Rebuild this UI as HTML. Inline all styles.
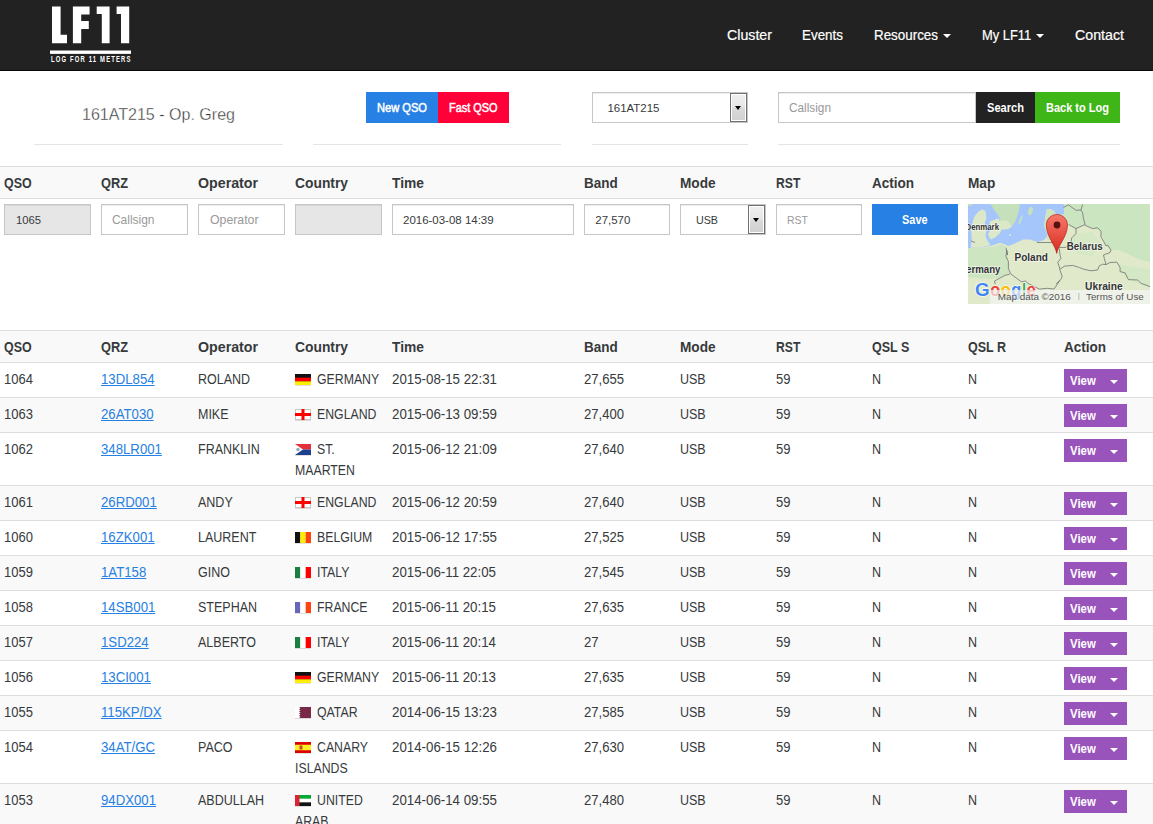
<!DOCTYPE html>
<html><head><meta charset="utf-8"><style>
html,body{margin:0;padding:0;}
body{width:1153px;height:824px;overflow:hidden;position:relative;background:#fff;font-family:"Liberation Sans", sans-serif;color:#373a3c;}
.t{position:absolute;white-space:nowrap;}
.r{position:absolute;}
.caret{width:0;height:0;border-style:solid;border-width:4px 4px 0 4px;border-color:transparent;}
.sel{border:1px solid #707070;box-shadow:inset 0 0 0 1px #fff;background:linear-gradient(#f0f0f0,#e6e6e6 48%,#dadada 52%,#d0d0d0);}
</style></head><body>
<div class="r" style="left:0px;top:0px;width:1153px;height:70px;background:#222;"></div>
<div class="r" style="left:0px;top:70px;width:1153px;height:1px;background:#080808;"></div>
<svg class="r" style="left:0;top:0" width="200" height="70" viewBox="0 0 200 70">
<g fill="#fff">
<path d="M52 6.5h8.6v28.2h6.4v8.6H52z"/>
<path d="M72.9 6.5h16.7v8.1h-8.4v6.4h7.6v8.1h-7.6v14.2h-8.3z"/>
<path d="M96.7 6.5h12.9v36.8h-7.8V14H96.7z"/>
<path d="M116.6 6.5h12.6v36.8h-8.2V14h-4.4z"/>
<rect x="50" y="50.5" width="81" height="3.4"/>
</g>
<g transform="translate(51,62.2) scale(0.7,1)"><text x="0" y="0" fill="#fff" font-family="Liberation Sans" font-weight="bold" font-size="8.4" textLength="113.5" lengthAdjust="spacing">LOG FOR 11 METERS</text></g>
</svg>
<div class="t" style="left:727px;top:28px;font-size:14.2px;line-height:14.2px;color:#fff;-webkit-text-stroke:0.2px #fff;transform:scaleX(1.0000);transform-origin:0 0;">Cluster</div>
<div class="t" style="left:802px;top:28px;font-size:14.2px;line-height:14.2px;color:#fff;-webkit-text-stroke:0.2px #fff;transform:scaleX(0.9447);transform-origin:0 0;">Events</div>
<div class="t" style="left:874px;top:28px;font-size:14.2px;line-height:14.2px;color:#fff;-webkit-text-stroke:0.2px #fff;transform:scaleX(0.9433);transform-origin:0 0;">Resources</div>
<div class="t" style="left:981.5px;top:28px;font-size:14.2px;line-height:14.2px;color:#fff;-webkit-text-stroke:0.2px #fff;transform:scaleX(0.9096);transform-origin:0 0;">My LF11</div>
<div class="t" style="left:1075px;top:28px;font-size:14.2px;line-height:14.2px;color:#fff;-webkit-text-stroke:0.2px #fff;transform:scaleX(1.0010);transform-origin:0 0;">Contact</div>
<div class="r caret" style="left:943px;top:34px;border-top-color:#fff"></div>
<div class="r caret" style="left:1036px;top:34px;border-top-color:#fff"></div>
<div class="t" style="left:82px;top:106px;font-size:16.05px;line-height:16.05px;color:#333;-webkit-text-stroke:0.35px #fff;">161AT215 - Op. Greg</div>
<div class="r" style="left:34px;top:144px;width:249px;height:1px;background:#e5e5e5;"></div>
<div class="r" style="left:313px;top:144px;width:248px;height:1px;background:#e5e5e5;"></div>
<div class="r" style="left:592px;top:144px;width:156px;height:1px;background:#e5e5e5;"></div>
<div class="r" style="left:778px;top:144px;width:342px;height:1px;background:#e5e5e5;"></div>
<div class="r" style="left:366px;top:92px;width:72px;height:31px;background:#2780e3;"></div>
<div class="r" style="left:438px;top:92px;width:71px;height:31px;background:#ff0039;"></div>
<div class="t" style="left:377px;top:102px;font-size:12px;line-height:12px;color:#fff;-webkit-text-stroke:0.5px #fff;transform:scaleX(0.9259);transform-origin:0 0;">New QSO</div>
<div class="t" style="left:449.4px;top:102px;font-size:12px;line-height:12px;color:#fff;-webkit-text-stroke:0.5px #fff;transform:scaleX(0.9110);transform-origin:0 0;">Fast QSO</div>
<div class="r" style="left:592px;top:92px;width:154px;height:29px;background:#fff;border:1px solid #c6c6c6;box-shadow:inset 0 1px 1px rgba(0,0,0,0.075);"></div>
<div class="r sel" style="left:730px;top:93px;width:15px;height:27px"></div>
<div class="r caret" style="left:735px;top:106px;border-top-color:#000;border-width:4px 3.7px 0 3.7px"></div>
<div class="t" style="left:607.5px;top:103px;font-size:11.45px;line-height:11.45px;transform:scaleX(1.0000);transform-origin:0 0;">161AT215</div>
<div class="r" style="left:778px;top:92px;width:196px;height:29px;background:#fff;border:1px solid #c6c6c6;box-shadow:inset 0 1px 1px rgba(0,0,0,0.075);"></div>
<div class="t" style="left:789.4px;top:103px;font-size:11.9px;line-height:11.9px;color:#999;transform:scaleX(0.9917);transform-origin:0 0;">Callsign</div>
<div class="r" style="left:976px;top:92px;width:59px;height:31px;background:#222;"></div>
<div class="r" style="left:1035px;top:92px;width:85px;height:31px;background:#3fb618;"></div>
<div class="t" style="left:987px;top:102px;font-size:12px;line-height:12px;font-weight:700;color:#fff;transform:scaleX(0.9238);transform-origin:0 0;">Search</div>
<div class="t" style="left:1045.8px;top:102px;font-size:12px;line-height:12px;font-weight:700;color:#fff;transform:scaleX(0.9170);transform-origin:0 0;">Back to Log</div>
<div class="r" style="left:0px;top:166px;width:1153px;height:1px;background:#ddd;"></div>
<div class="r" style="left:0px;top:167px;width:1153px;height:31px;background:#f9f9f9;"></div>
<div class="r" style="left:0px;top:198px;width:1153px;height:1px;background:#ddd;"></div>
<div class="t" style="left:4px;top:176px;font-size:14px;line-height:14px;font-weight:700;transform:scaleX(0.8875);transform-origin:0 0;">QSO</div>
<div class="t" style="left:101px;top:176px;font-size:14px;line-height:14px;font-weight:700;transform:scaleX(0.9137);transform-origin:0 0;">QRZ</div>
<div class="t" style="left:198px;top:176px;font-size:14px;line-height:14px;font-weight:700;transform:scaleX(1.0152);transform-origin:0 0;">Operator</div>
<div class="t" style="left:295px;top:176px;font-size:14px;line-height:14px;font-weight:700;transform:scaleX(0.9879);transform-origin:0 0;">Country</div>
<div class="t" style="left:392px;top:176px;font-size:14px;line-height:14px;font-weight:700;transform:scaleX(0.9846);transform-origin:0 0;">Time</div>
<div class="t" style="left:584px;top:176px;font-size:14px;line-height:14px;font-weight:700;transform:scaleX(0.9629);transform-origin:0 0;">Band</div>
<div class="t" style="left:680px;top:176px;font-size:14px;line-height:14px;font-weight:700;transform:scaleX(0.9740);transform-origin:0 0;">Mode</div>
<div class="t" style="left:776px;top:176px;font-size:14px;line-height:14px;font-weight:700;transform:scaleX(0.8679);transform-origin:0 0;">RST</div>
<div class="t" style="left:872px;top:176px;font-size:14px;line-height:14px;font-weight:700;transform:scaleX(0.9667);transform-origin:0 0;">Action</div>
<div class="t" style="left:968px;top:176px;font-size:14px;line-height:14px;font-weight:700;transform:scaleX(0.9750);transform-origin:0 0;">Map</div>
<div class="r" style="left:4px;top:204px;width:85px;height:29px;background:#e6e6e6;border:1px solid #c6c6c6;box-shadow:inset 0 1px 1px rgba(0,0,0,0.075);"></div>
<div class="t" style="left:15.5px;top:215px;font-size:11px;line-height:11px;transform:scaleX(1.0225);transform-origin:0 0;">1065</div>
<div class="r" style="left:101px;top:204px;width:85px;height:29px;background:#fff;border:1px solid #c6c6c6;box-shadow:inset 0 1px 1px rgba(0,0,0,0.075);"></div>
<div class="t" style="left:112.3px;top:215px;font-size:11.9px;line-height:11.9px;color:#999;transform:scaleX(1.0035);transform-origin:0 0;">Callsign</div>
<div class="r" style="left:198px;top:204px;width:85px;height:29px;background:#fff;border:1px solid #c6c6c6;box-shadow:inset 0 1px 1px rgba(0,0,0,0.075);"></div>
<div class="t" style="left:209.5px;top:214px;font-size:12px;line-height:12px;color:#999;transform:scaleX(1.0243);transform-origin:0 0;">Operator</div>
<div class="r" style="left:295px;top:204px;width:85px;height:29px;background:#e6e6e6;border:1px solid #c6c6c6;box-shadow:inset 0 1px 1px rgba(0,0,0,0.075);"></div>
<div class="r" style="left:392px;top:204px;width:180px;height:29px;background:#fff;border:1px solid #c6c6c6;box-shadow:inset 0 1px 1px rgba(0,0,0,0.075);"></div>
<div class="t" style="left:403.4px;top:215px;font-size:11.5px;line-height:11.5px;transform:scaleX(0.9978);transform-origin:0 0;">2016-03-08 14:39</div>
<div class="r" style="left:584px;top:204px;width:84px;height:29px;background:#fff;border:1px solid #c6c6c6;box-shadow:inset 0 1px 1px rgba(0,0,0,0.075);"></div>
<div class="t" style="left:595.3px;top:215px;font-size:11.45px;line-height:11.45px;transform:scaleX(1.0000);transform-origin:0 0;">27,570</div>
<div class="r" style="left:680px;top:204px;width:84px;height:29px;background:#fff;border:1px solid #c6c6c6;box-shadow:inset 0 1px 1px rgba(0,0,0,0.075);"></div>
<div class="r sel" style="left:748px;top:205px;width:15px;height:27px"></div>
<div class="r caret" style="left:753px;top:218px;border-top-color:#000;border-width:4px 3.7px 0 3.7px"></div>
<div class="t" style="left:695.6px;top:215px;font-size:11.5px;line-height:11.5px;transform:scaleX(0.9302);transform-origin:0 0;">USB</div>
<div class="r" style="left:776px;top:204px;width:84px;height:29px;background:#fff;border:1px solid #c6c6c6;box-shadow:inset 0 1px 1px rgba(0,0,0,0.075);"></div>
<div class="t" style="left:787.2px;top:215px;font-size:11.5px;line-height:11.5px;color:#999;transform:scaleX(0.9130);transform-origin:0 0;">RST</div>
<div class="r" style="left:872px;top:204px;width:86px;height:31px;background:#2780e3;"></div>
<div class="t" style="left:902.4px;top:214px;font-size:12px;line-height:12px;font-weight:700;color:#fff;transform:scaleX(0.9127);transform-origin:0 0;">Save</div>
<svg class="r" style="left:968px;top:204px" width="182" height="100" viewBox="0 0 182 100">
<defs><linearGradient id="pg" x1="0" y1="0" x2="0" y2="1"><stop offset="0" stop-color="#f77a6c"/><stop offset="1" stop-color="#d8291c"/></linearGradient></defs>
<rect width="182" height="100" fill="#e0eacb"/>
<path d="M96 0H182V58L172 56L160 50L150 46L143 46L138 42L135.5 37L133 27L124 24L117 21L108 24.6L100 20L96 18Z" fill="#cce5c1"/>
<path d="M0 44L12 44L25 43L34 40L38 44L40 58L42 69L30 74L20 75L0 73Z" fill="#cde5c0"/>
<path d="M150 60L160 62L182 65V84L172 80L160 76L152 68Z" fill="#d5e8c6"/>
<path d="M105 30L125 28L133 40L125 52L110 50L104 40Z" fill="#d6e8c5"/>
<path d="M0 0H96V10.5L88 10.5L86 7L82 5L78.7 5.3L77.1 14.3L76.3 22.5L79.5 30.6L78.7 33L75.5 36.3L68.9 38L62.4 35.5L55.1 35.5L46.9 39.6L40.4 42L37.1 40.4L32.2 38.8L22.5 42L10.2 43.7L0 44Z" fill="#a5c6fb"/>
<path d="M22.5 0H52.2L50.2 9.4L46.9 18.4L43.7 22.5L40.4 24.9L33.1 25.7L32.2 14.3L26.5 6.2Z" fill="#c5e1bc"/>
<path d="M32.2 16L40 17L43.7 22.5L40.4 24.9L33.1 25.7Z" fill="#dce8c8"/>
<path d="M14.3 5.3L17.6 7L18.4 14.3L16.8 19.2L18.4 24.9L17.6 32.2L19.2 36.3L22.5 41.2L10.2 43.7L2.9 43.7L3.7 33L2.9 24.9L4.5 18.4L6.2 12.7L10.2 7.8Z" fill="#dce8c8"/>
<path d="M21.6 17.6L30.6 14.3L34.7 22.5L32.2 29L26.5 33.9L22.5 35.5L20 30.6L22.5 24.9Z" fill="#dce8c8"/>
<path d="M0 0H4.5L3 1.7H0Z" fill="#c5e1bc"/>
<ellipse cx="62.5" cy="7" rx="2.2" ry="4.3" fill="#c5e1bc" transform="rotate(15 62.5 7)"/>
<ellipse cx="52.5" cy="16" rx="0.9" ry="5" fill="#c5e1bc" transform="rotate(20 52.5 16)"/>
<circle cx="42" cy="31" r="1" fill="#dce8c8"/>
<path d="M78.7 5.3L82 5L86 7L88 10.5L96 10.5L96 36L79.5 36L78.7 33L79.5 30.6L76.3 22.5L77.1 14.3Z" fill="#cfe5c1"/>
<g fill="none" stroke="#777" stroke-width="0.85" stroke-linejoin="round">
<path d="M38 43.6L39.6 51L38.7 46L38 52.5L40.4 57.4L40.4 64.7L42.4 68.8L41.2 70.4L37 71.3L26.5 77L27.3 80.2"/>
<path d="M42.4 69.6L50 75.3L53.4 77.8L57.5 77L60 79.4L66.5 82.7L71.4 85.1L79.5 84.3L86 85.1L92 76.2"/>
<path d="M69 38.5H92.4"/>
<path d="M88 43.4H98L103 38L103.8 33.8L108 29.6L108 24.6"/>
<path d="M91.3 44.6L92.2 52L93 54.3L89.7 58.5L91.3 62.7L92.2 66.8L94.2 72.6L93 75.1L88 80.1"/>
<path d="M92.2 65.2L96.3 62.2L104.7 61.4L111.3 63.5L115.5 65.2L123 66.8L129.6 66L131.3 61.8L134.6 60.2L138 60.6L142 58.5L148.8 58.1L152.1 63.5L152.1 67.6L157.1 68.9L160.4 75.6L169.6 76L173 79.3L182 82.6"/>
<path d="M138 60.6L136.3 54.3L135.5 51L142.1 48.5L143 46L139.6 41L138 42L135.5 37.1L133 33L133 27.1L129.6 23.8L124.6 24.6L117.1 21.3"/>
<path d="M95.5 3.4L100.5 0.9L108 6.3L113 5.9L114.6 0.5"/>
<path d="M113 5.9L114.6 8.8L115.5 14.7L117.1 20.5L108 24.6L100.5 20.5"/>
<path d="M3 37L7 38.5"/>
</g>
<g font-family="Liberation Sans" font-weight="bold" fill="#333" stroke="#fff" stroke-width="1.6" stroke-opacity="0.6" paint-order="stroke">
<text x="-2.5" y="25.6" font-size="9.2" textLength="33.5" lengthAdjust="spacingAndGlyphs">Denmark</text>
<text x="46.5" y="56.6" font-size="10.8" textLength="33.4" lengthAdjust="spacingAndGlyphs">Poland</text>
<text x="98.8" y="46.4" font-size="10.2" textLength="35.8" lengthAdjust="spacingAndGlyphs">Belarus</text>
<text x="-9.5" y="68.5" font-size="10.6" textLength="42" lengthAdjust="spacingAndGlyphs">Germany</text>
<text x="117.1" y="86" font-size="10.5" textLength="37.5" lengthAdjust="spacingAndGlyphs">Ukraine</text>
</g>
<g font-family="Liberation Sans" font-size="19" font-weight="bold" stroke="#fff" stroke-width="1.6" stroke-opacity="0.75" paint-order="stroke">
<text x="7" y="92" fill="#4285f4" textLength="14.6" lengthAdjust="spacingAndGlyphs">G</text>
<text x="22.3" y="92" fill="#ea4335" textLength="10" lengthAdjust="spacingAndGlyphs">o</text>
<text x="32.8" y="92" fill="#fbbc05" textLength="10" lengthAdjust="spacingAndGlyphs">o</text>
<text x="43.2" y="92" fill="#4285f4" textLength="10" lengthAdjust="spacingAndGlyphs">g</text>
<text x="54.2" y="92" fill="#34a853" textLength="3.6" lengthAdjust="spacingAndGlyphs">l</text>
<text x="58.4" y="92" fill="#ea4335" textLength="9.4" lengthAdjust="spacingAndGlyphs">e</text>
</g>
<rect x="22" y="86" width="160" height="14" fill="#f5f5f5" fill-opacity="0.7"/>
<g font-family="Liberation Sans" font-size="9.4" fill="#555">
<text x="29.8" y="95.8" textLength="73" lengthAdjust="spacingAndGlyphs">Map data ©2016</text>
<text x="118" y="96" textLength="57.8" lengthAdjust="spacingAndGlyphs">Terms of Use</text>
</g>
<rect x="110.5" y="89" width="0.8" height="7" fill="#aaa"/>
<path d="M88.7 49.4C87.5 41 78.5 33 78.3 21A10.6 10.6 0 0 1 99.5 21C99.3 33 90 41 88.7 49.4Z" fill="url(#pg)" stroke="#b0201a" stroke-width="0.7"/>
<circle cx="89" cy="21" r="3.4" fill="#5a1010"/>
</svg>

<div class="r" style="left:0px;top:330px;width:1153px;height:1px;background:#ddd;"></div>
<div class="r" style="left:0px;top:331px;width:1153px;height:31px;background:#f9f9f9;"></div>
<div class="r" style="left:0px;top:362px;width:1153px;height:1px;background:#ddd;"></div>
<div class="t" style="left:4px;top:340px;font-size:14px;line-height:14px;font-weight:700;transform:scaleX(0.8875);transform-origin:0 0;">QSO</div>
<div class="t" style="left:101px;top:340px;font-size:14px;line-height:14px;font-weight:700;transform:scaleX(0.9137);transform-origin:0 0;">QRZ</div>
<div class="t" style="left:198px;top:340px;font-size:14px;line-height:14px;font-weight:700;transform:scaleX(1.0152);transform-origin:0 0;">Operator</div>
<div class="t" style="left:295px;top:340px;font-size:14px;line-height:14px;font-weight:700;transform:scaleX(0.9879);transform-origin:0 0;">Country</div>
<div class="t" style="left:392px;top:340px;font-size:14px;line-height:14px;font-weight:700;transform:scaleX(0.9846);transform-origin:0 0;">Time</div>
<div class="t" style="left:584px;top:340px;font-size:14px;line-height:14px;font-weight:700;transform:scaleX(0.9629);transform-origin:0 0;">Band</div>
<div class="t" style="left:680px;top:340px;font-size:14px;line-height:14px;font-weight:700;transform:scaleX(0.9740);transform-origin:0 0;">Mode</div>
<div class="t" style="left:776px;top:340px;font-size:14px;line-height:14px;font-weight:700;transform:scaleX(0.8679);transform-origin:0 0;">RST</div>
<div class="t" style="left:872px;top:340px;font-size:14px;line-height:14px;font-weight:700;transform:scaleX(0.8934);transform-origin:0 0;">QSL S</div>
<div class="t" style="left:968px;top:340px;font-size:14px;line-height:14px;font-weight:700;transform:scaleX(0.8931);transform-origin:0 0;">QSL R</div>
<div class="t" style="left:1064px;top:340px;font-size:14px;line-height:14px;font-weight:700;transform:scaleX(0.9667);transform-origin:0 0;">Action</div>
<div class="r" style="left:0px;top:397px;width:1153px;height:1px;background:#ddd;"></div>
<div class="t" style="left:4px;top:372px;font-size:14px;line-height:14px;transform:scaleX(0.9278);transform-origin:0 0;">1064</div>
<div class="t" style="left:101px;top:372px;font-size:14px;line-height:14px;color:#2780e3;text-decoration:underline;transform:scaleX(0.9428);transform-origin:0 0;">13DL854</div>
<div class="t" style="left:198px;top:372px;font-size:14px;line-height:14px;transform:scaleX(0.8929);transform-origin:0 0;">ROLAND</div>
<svg class="r" style="left:295px;top:374px" width="16" height="12" viewBox="0 0 16 12"><rect width="16" height="11" fill="#111"/><rect y="3.67" width="16" height="3.67" fill="#f00"/><rect y="7.33" width="16" height="3.67" fill="#fe0"/><rect y="11" width="16" height="1" fill="#000" fill-opacity="0.12"/></svg>
<div class="t" style="left:317px;top:372px;font-size:14px;line-height:14px;transform:scaleX(0.8785);transform-origin:0 0;">GERMANY</div>
<div class="t" style="left:392px;top:372px;font-size:14px;line-height:14px;transform:scaleX(0.9498);transform-origin:0 0;">2015-08-15 22:31</div>
<div class="t" style="left:584px;top:372px;font-size:14px;line-height:14px;transform:scaleX(0.9357);transform-origin:0 0;">27,655</div>
<div class="t" style="left:680px;top:372px;font-size:14px;line-height:14px;transform:scaleX(0.8924);transform-origin:0 0;">USB</div>
<div class="t" style="left:776px;top:372px;font-size:14px;line-height:14px;transform:scaleX(0.9293);transform-origin:0 0;">59</div>
<div class="t" style="left:872px;top:372px;font-size:14px;line-height:14px;transform:scaleX(0.8960);transform-origin:0 0;">N</div>
<div class="t" style="left:968px;top:372px;font-size:14px;line-height:14px;transform:scaleX(0.8960);transform-origin:0 0;">N</div>
<div class="r" style="left:1064px;top:369px;width:63px;height:23px;background:#9954bb;"></div>
<div class="t" style="left:1070px;top:375px;font-size:12px;line-height:12px;font-weight:700;color:#fff;transform:scaleX(0.9485);transform-origin:0 0;">View</div>
<div class="r caret" style="left:1110px;top:380px;border-top-color:#fff;border-width:4px 4px 0 4px"></div>
<div class="r" style="left:0px;top:398px;width:1153px;height:34px;background:#f9f9f9;"></div>
<div class="r" style="left:0px;top:432px;width:1153px;height:1px;background:#ddd;"></div>
<div class="t" style="left:4px;top:407px;font-size:14px;line-height:14px;transform:scaleX(0.9278);transform-origin:0 0;">1063</div>
<div class="t" style="left:101px;top:407px;font-size:14px;line-height:14px;color:#2780e3;text-decoration:underline;transform:scaleX(0.9427);transform-origin:0 0;">26AT030</div>
<div class="t" style="left:198px;top:407px;font-size:14px;line-height:14px;transform:scaleX(0.8920);transform-origin:0 0;">MIKE</div>
<svg class="r" style="left:295px;top:409px" width="16" height="12" viewBox="0 0 16 12"><rect x="0.5" y="0.5" width="15" height="10" fill="#fff" stroke="#c8c8c8"/><rect x="6.5" width="3" height="11" fill="#f00"/><rect y="4" width="16" height="3" fill="#f00"/><rect y="11" width="16" height="1" fill="#000" fill-opacity="0.12"/></svg>
<div class="t" style="left:317px;top:407px;font-size:14px;line-height:14px;transform:scaleX(0.8781);transform-origin:0 0;">ENGLAND</div>
<div class="t" style="left:392px;top:407px;font-size:14px;line-height:14px;transform:scaleX(0.9498);transform-origin:0 0;">2015-06-13 09:59</div>
<div class="t" style="left:584px;top:407px;font-size:14px;line-height:14px;transform:scaleX(0.9357);transform-origin:0 0;">27,400</div>
<div class="t" style="left:680px;top:407px;font-size:14px;line-height:14px;transform:scaleX(0.8924);transform-origin:0 0;">USB</div>
<div class="t" style="left:776px;top:407px;font-size:14px;line-height:14px;transform:scaleX(0.9293);transform-origin:0 0;">59</div>
<div class="t" style="left:872px;top:407px;font-size:14px;line-height:14px;transform:scaleX(0.8960);transform-origin:0 0;">N</div>
<div class="t" style="left:968px;top:407px;font-size:14px;line-height:14px;transform:scaleX(0.8960);transform-origin:0 0;">N</div>
<div class="r" style="left:1064px;top:404px;width:63px;height:23px;background:#9954bb;"></div>
<div class="t" style="left:1070px;top:410px;font-size:12px;line-height:12px;font-weight:700;color:#fff;transform:scaleX(0.9485);transform-origin:0 0;">View</div>
<div class="r caret" style="left:1110px;top:415px;border-top-color:#fff;border-width:4px 4px 0 4px"></div>
<div class="r" style="left:0px;top:485px;width:1153px;height:1px;background:#ddd;"></div>
<div class="t" style="left:4px;top:442px;font-size:14px;line-height:14px;transform:scaleX(0.9278);transform-origin:0 0;">1062</div>
<div class="t" style="left:101px;top:442px;font-size:14px;line-height:14px;color:#2780e3;text-decoration:underline;transform:scaleX(0.9427);transform-origin:0 0;">348LR001</div>
<div class="t" style="left:198px;top:442px;font-size:14px;line-height:14px;transform:scaleX(0.8924);transform-origin:0 0;">FRANKLIN</div>
<svg class="r" style="left:295px;top:444px" width="16" height="12" viewBox="0 0 16 12"><rect width="16" height="5.5" fill="#e2313b"/><rect y="5.5" width="16" height="5.5" fill="#1d3f8e"/><path d="M0 0L8 5.5L0 11z" fill="#fff"/><circle cx="3" cy="5.5" r="1.8" fill="#9ab"/><rect y="11" width="16" height="1" fill="#000" fill-opacity="0.12"/></svg>
<div class="t" style="left:317px;top:442px;font-size:14px;line-height:14px;transform:scaleX(0.8765);transform-origin:0 0;">ST.</div>
<div class="t" style="left:295px;top:463px;font-size:14px;line-height:14px;transform:scaleX(0.8783);transform-origin:0 0;">MAARTEN</div>
<div class="t" style="left:392px;top:442px;font-size:14px;line-height:14px;transform:scaleX(0.9498);transform-origin:0 0;">2015-06-12 21:09</div>
<div class="t" style="left:584px;top:442px;font-size:14px;line-height:14px;transform:scaleX(0.9357);transform-origin:0 0;">27,640</div>
<div class="t" style="left:680px;top:442px;font-size:14px;line-height:14px;transform:scaleX(0.8924);transform-origin:0 0;">USB</div>
<div class="t" style="left:776px;top:442px;font-size:14px;line-height:14px;transform:scaleX(0.9293);transform-origin:0 0;">59</div>
<div class="t" style="left:872px;top:442px;font-size:14px;line-height:14px;transform:scaleX(0.8960);transform-origin:0 0;">N</div>
<div class="t" style="left:968px;top:442px;font-size:14px;line-height:14px;transform:scaleX(0.8960);transform-origin:0 0;">N</div>
<div class="r" style="left:1064px;top:439px;width:63px;height:23px;background:#9954bb;"></div>
<div class="t" style="left:1070px;top:445px;font-size:12px;line-height:12px;font-weight:700;color:#fff;transform:scaleX(0.9485);transform-origin:0 0;">View</div>
<div class="r caret" style="left:1110px;top:450px;border-top-color:#fff;border-width:4px 4px 0 4px"></div>
<div class="r" style="left:0px;top:486px;width:1153px;height:34px;background:#f9f9f9;"></div>
<div class="r" style="left:0px;top:520px;width:1153px;height:1px;background:#ddd;"></div>
<div class="t" style="left:4px;top:495px;font-size:14px;line-height:14px;transform:scaleX(0.9278);transform-origin:0 0;">1061</div>
<div class="t" style="left:101px;top:495px;font-size:14px;line-height:14px;color:#2780e3;text-decoration:underline;transform:scaleX(0.9425);transform-origin:0 0;">26RD001</div>
<div class="t" style="left:198px;top:495px;font-size:14px;line-height:14px;transform:scaleX(0.8933);transform-origin:0 0;">ANDY</div>
<svg class="r" style="left:295px;top:497px" width="16" height="12" viewBox="0 0 16 12"><rect x="0.5" y="0.5" width="15" height="10" fill="#fff" stroke="#c8c8c8"/><rect x="6.5" width="3" height="11" fill="#f00"/><rect y="4" width="16" height="3" fill="#f00"/><rect y="11" width="16" height="1" fill="#000" fill-opacity="0.12"/></svg>
<div class="t" style="left:317px;top:495px;font-size:14px;line-height:14px;transform:scaleX(0.8781);transform-origin:0 0;">ENGLAND</div>
<div class="t" style="left:392px;top:495px;font-size:14px;line-height:14px;transform:scaleX(0.9498);transform-origin:0 0;">2015-06-12 20:59</div>
<div class="t" style="left:584px;top:495px;font-size:14px;line-height:14px;transform:scaleX(0.9357);transform-origin:0 0;">27,640</div>
<div class="t" style="left:680px;top:495px;font-size:14px;line-height:14px;transform:scaleX(0.8924);transform-origin:0 0;">USB</div>
<div class="t" style="left:776px;top:495px;font-size:14px;line-height:14px;transform:scaleX(0.9293);transform-origin:0 0;">59</div>
<div class="t" style="left:872px;top:495px;font-size:14px;line-height:14px;transform:scaleX(0.8960);transform-origin:0 0;">N</div>
<div class="t" style="left:968px;top:495px;font-size:14px;line-height:14px;transform:scaleX(0.8960);transform-origin:0 0;">N</div>
<div class="r" style="left:1064px;top:492px;width:63px;height:23px;background:#9954bb;"></div>
<div class="t" style="left:1070px;top:498px;font-size:12px;line-height:12px;font-weight:700;color:#fff;transform:scaleX(0.9485);transform-origin:0 0;">View</div>
<div class="r caret" style="left:1110px;top:503px;border-top-color:#fff;border-width:4px 4px 0 4px"></div>
<div class="r" style="left:0px;top:555px;width:1153px;height:1px;background:#ddd;"></div>
<div class="t" style="left:4px;top:530px;font-size:14px;line-height:14px;transform:scaleX(0.9278);transform-origin:0 0;">1060</div>
<div class="t" style="left:101px;top:530px;font-size:14px;line-height:14px;color:#2780e3;text-decoration:underline;transform:scaleX(0.9437);transform-origin:0 0;">16ZK001</div>
<div class="t" style="left:198px;top:530px;font-size:14px;line-height:14px;transform:scaleX(0.8929);transform-origin:0 0;">LAURENT</div>
<svg class="r" style="left:295px;top:532px" width="16" height="12" viewBox="0 0 16 12"><rect width="5.33" height="11" fill="#111"/><rect x="5.33" width="5.34" height="11" fill="#fe0"/><rect x="10.67" width="5.33" height="11" fill="#f41"/><rect y="11" width="16" height="1" fill="#000" fill-opacity="0.12"/></svg>
<div class="t" style="left:317px;top:530px;font-size:14px;line-height:14px;transform:scaleX(0.8786);transform-origin:0 0;">BELGIUM</div>
<div class="t" style="left:392px;top:530px;font-size:14px;line-height:14px;transform:scaleX(0.9498);transform-origin:0 0;">2015-06-12 17:55</div>
<div class="t" style="left:584px;top:530px;font-size:14px;line-height:14px;transform:scaleX(0.9357);transform-origin:0 0;">27,525</div>
<div class="t" style="left:680px;top:530px;font-size:14px;line-height:14px;transform:scaleX(0.8924);transform-origin:0 0;">USB</div>
<div class="t" style="left:776px;top:530px;font-size:14px;line-height:14px;transform:scaleX(0.9293);transform-origin:0 0;">59</div>
<div class="t" style="left:872px;top:530px;font-size:14px;line-height:14px;transform:scaleX(0.8960);transform-origin:0 0;">N</div>
<div class="t" style="left:968px;top:530px;font-size:14px;line-height:14px;transform:scaleX(0.8960);transform-origin:0 0;">N</div>
<div class="r" style="left:1064px;top:527px;width:63px;height:23px;background:#9954bb;"></div>
<div class="t" style="left:1070px;top:533px;font-size:12px;line-height:12px;font-weight:700;color:#fff;transform:scaleX(0.9485);transform-origin:0 0;">View</div>
<div class="r caret" style="left:1110px;top:538px;border-top-color:#fff;border-width:4px 4px 0 4px"></div>
<div class="r" style="left:0px;top:556px;width:1153px;height:34px;background:#f9f9f9;"></div>
<div class="r" style="left:0px;top:590px;width:1153px;height:1px;background:#ddd;"></div>
<div class="t" style="left:4px;top:565px;font-size:14px;line-height:14px;transform:scaleX(0.9278);transform-origin:0 0;">1059</div>
<div class="t" style="left:101px;top:565px;font-size:14px;line-height:14px;color:#2780e3;text-decoration:underline;transform:scaleX(0.9427);transform-origin:0 0;">1AT158</div>
<div class="t" style="left:198px;top:565px;font-size:14px;line-height:14px;transform:scaleX(0.8925);transform-origin:0 0;">GINO</div>
<svg class="r" style="left:295px;top:567px" width="16" height="12" viewBox="0 0 16 12"><rect width="5.33" height="11" fill="#1a8040"/><rect x="5.33" width="5.34" height="11" fill="#fff"/><rect x="10.67" width="5.33" height="11" fill="#f00"/><rect y="11" width="16" height="1" fill="#000" fill-opacity="0.12"/></svg>
<div class="t" style="left:317px;top:565px;font-size:14px;line-height:14px;transform:scaleX(0.8779);transform-origin:0 0;">ITALY</div>
<div class="t" style="left:392px;top:565px;font-size:14px;line-height:14px;transform:scaleX(0.9498);transform-origin:0 0;">2015-06-11 22:05</div>
<div class="t" style="left:584px;top:565px;font-size:14px;line-height:14px;transform:scaleX(0.9357);transform-origin:0 0;">27,545</div>
<div class="t" style="left:680px;top:565px;font-size:14px;line-height:14px;transform:scaleX(0.8924);transform-origin:0 0;">USB</div>
<div class="t" style="left:776px;top:565px;font-size:14px;line-height:14px;transform:scaleX(0.9293);transform-origin:0 0;">59</div>
<div class="t" style="left:872px;top:565px;font-size:14px;line-height:14px;transform:scaleX(0.8960);transform-origin:0 0;">N</div>
<div class="t" style="left:968px;top:565px;font-size:14px;line-height:14px;transform:scaleX(0.8960);transform-origin:0 0;">N</div>
<div class="r" style="left:1064px;top:562px;width:63px;height:23px;background:#9954bb;"></div>
<div class="t" style="left:1070px;top:568px;font-size:12px;line-height:12px;font-weight:700;color:#fff;transform:scaleX(0.9485);transform-origin:0 0;">View</div>
<div class="r caret" style="left:1110px;top:573px;border-top-color:#fff;border-width:4px 4px 0 4px"></div>
<div class="r" style="left:0px;top:625px;width:1153px;height:1px;background:#ddd;"></div>
<div class="t" style="left:4px;top:600px;font-size:14px;line-height:14px;transform:scaleX(0.9278);transform-origin:0 0;">1058</div>
<div class="t" style="left:101px;top:600px;font-size:14px;line-height:14px;color:#2780e3;text-decoration:underline;transform:scaleX(0.9427);transform-origin:0 0;">14SB001</div>
<div class="t" style="left:198px;top:600px;font-size:14px;line-height:14px;transform:scaleX(0.8927);transform-origin:0 0;">STEPHAN</div>
<svg class="r" style="left:295px;top:602px" width="16" height="12" viewBox="0 0 16 12"><rect width="5.33" height="11" fill="#6666bb"/><rect x="5.33" width="5.34" height="11" fill="#fff"/><rect x="10.67" width="5.33" height="11" fill="#f41"/><rect y="11" width="16" height="1" fill="#000" fill-opacity="0.12"/></svg>
<div class="t" style="left:317px;top:600px;font-size:14px;line-height:14px;transform:scaleX(0.8784);transform-origin:0 0;">FRANCE</div>
<div class="t" style="left:392px;top:600px;font-size:14px;line-height:14px;transform:scaleX(0.9498);transform-origin:0 0;">2015-06-11 20:15</div>
<div class="t" style="left:584px;top:600px;font-size:14px;line-height:14px;transform:scaleX(0.9357);transform-origin:0 0;">27,635</div>
<div class="t" style="left:680px;top:600px;font-size:14px;line-height:14px;transform:scaleX(0.8924);transform-origin:0 0;">USB</div>
<div class="t" style="left:776px;top:600px;font-size:14px;line-height:14px;transform:scaleX(0.9293);transform-origin:0 0;">59</div>
<div class="t" style="left:872px;top:600px;font-size:14px;line-height:14px;transform:scaleX(0.8960);transform-origin:0 0;">N</div>
<div class="t" style="left:968px;top:600px;font-size:14px;line-height:14px;transform:scaleX(0.8960);transform-origin:0 0;">N</div>
<div class="r" style="left:1064px;top:597px;width:63px;height:23px;background:#9954bb;"></div>
<div class="t" style="left:1070px;top:603px;font-size:12px;line-height:12px;font-weight:700;color:#fff;transform:scaleX(0.9485);transform-origin:0 0;">View</div>
<div class="r caret" style="left:1110px;top:608px;border-top-color:#fff;border-width:4px 4px 0 4px"></div>
<div class="r" style="left:0px;top:626px;width:1153px;height:34px;background:#f9f9f9;"></div>
<div class="r" style="left:0px;top:660px;width:1153px;height:1px;background:#ddd;"></div>
<div class="t" style="left:4px;top:635px;font-size:14px;line-height:14px;transform:scaleX(0.9278);transform-origin:0 0;">1057</div>
<div class="t" style="left:101px;top:635px;font-size:14px;line-height:14px;color:#2780e3;text-decoration:underline;transform:scaleX(0.9427);transform-origin:0 0;">1SD224</div>
<div class="t" style="left:198px;top:635px;font-size:14px;line-height:14px;transform:scaleX(0.8928);transform-origin:0 0;">ALBERTO</div>
<svg class="r" style="left:295px;top:637px" width="16" height="12" viewBox="0 0 16 12"><rect width="5.33" height="11" fill="#1a8040"/><rect x="5.33" width="5.34" height="11" fill="#fff"/><rect x="10.67" width="5.33" height="11" fill="#f00"/><rect y="11" width="16" height="1" fill="#000" fill-opacity="0.12"/></svg>
<div class="t" style="left:317px;top:635px;font-size:14px;line-height:14px;transform:scaleX(0.8779);transform-origin:0 0;">ITALY</div>
<div class="t" style="left:392px;top:635px;font-size:14px;line-height:14px;transform:scaleX(0.9498);transform-origin:0 0;">2015-06-11 20:14</div>
<div class="t" style="left:584px;top:635px;font-size:14px;line-height:14px;transform:scaleX(0.9357);transform-origin:0 0;">27</div>
<div class="t" style="left:680px;top:635px;font-size:14px;line-height:14px;transform:scaleX(0.8924);transform-origin:0 0;">USB</div>
<div class="t" style="left:776px;top:635px;font-size:14px;line-height:14px;transform:scaleX(0.9293);transform-origin:0 0;">59</div>
<div class="t" style="left:872px;top:635px;font-size:14px;line-height:14px;transform:scaleX(0.8960);transform-origin:0 0;">N</div>
<div class="t" style="left:968px;top:635px;font-size:14px;line-height:14px;transform:scaleX(0.8960);transform-origin:0 0;">N</div>
<div class="r" style="left:1064px;top:632px;width:63px;height:23px;background:#9954bb;"></div>
<div class="t" style="left:1070px;top:638px;font-size:12px;line-height:12px;font-weight:700;color:#fff;transform:scaleX(0.9485);transform-origin:0 0;">View</div>
<div class="r caret" style="left:1110px;top:643px;border-top-color:#fff;border-width:4px 4px 0 4px"></div>
<div class="r" style="left:0px;top:695px;width:1153px;height:1px;background:#ddd;"></div>
<div class="t" style="left:4px;top:670px;font-size:14px;line-height:14px;transform:scaleX(0.9278);transform-origin:0 0;">1056</div>
<div class="t" style="left:101px;top:670px;font-size:14px;line-height:14px;color:#2780e3;text-decoration:underline;transform:scaleX(0.9424);transform-origin:0 0;">13CI001</div>
<svg class="r" style="left:295px;top:672px" width="16" height="12" viewBox="0 0 16 12"><rect width="16" height="11" fill="#111"/><rect y="3.67" width="16" height="3.67" fill="#f00"/><rect y="7.33" width="16" height="3.67" fill="#fe0"/><rect y="11" width="16" height="1" fill="#000" fill-opacity="0.12"/></svg>
<div class="t" style="left:317px;top:670px;font-size:14px;line-height:14px;transform:scaleX(0.8785);transform-origin:0 0;">GERMANY</div>
<div class="t" style="left:392px;top:670px;font-size:14px;line-height:14px;transform:scaleX(0.9498);transform-origin:0 0;">2015-06-11 20:13</div>
<div class="t" style="left:584px;top:670px;font-size:14px;line-height:14px;transform:scaleX(0.9357);transform-origin:0 0;">27,635</div>
<div class="t" style="left:680px;top:670px;font-size:14px;line-height:14px;transform:scaleX(0.8924);transform-origin:0 0;">USB</div>
<div class="t" style="left:776px;top:670px;font-size:14px;line-height:14px;transform:scaleX(0.9293);transform-origin:0 0;">59</div>
<div class="t" style="left:872px;top:670px;font-size:14px;line-height:14px;transform:scaleX(0.8960);transform-origin:0 0;">N</div>
<div class="t" style="left:968px;top:670px;font-size:14px;line-height:14px;transform:scaleX(0.8960);transform-origin:0 0;">N</div>
<div class="r" style="left:1064px;top:667px;width:63px;height:23px;background:#9954bb;"></div>
<div class="t" style="left:1070px;top:673px;font-size:12px;line-height:12px;font-weight:700;color:#fff;transform:scaleX(0.9485);transform-origin:0 0;">View</div>
<div class="r caret" style="left:1110px;top:678px;border-top-color:#fff;border-width:4px 4px 0 4px"></div>
<div class="r" style="left:0px;top:696px;width:1153px;height:34px;background:#f9f9f9;"></div>
<div class="r" style="left:0px;top:730px;width:1153px;height:1px;background:#ddd;"></div>
<div class="t" style="left:4px;top:705px;font-size:14px;line-height:14px;transform:scaleX(0.9278);transform-origin:0 0;">1055</div>
<div class="t" style="left:101px;top:705px;font-size:14px;line-height:14px;color:#2780e3;text-decoration:underline;transform:scaleX(0.9425);transform-origin:0 0;">115KP/DX</div>
<svg class="r" style="left:295px;top:707px" width="16" height="12" viewBox="0 0 16 12"><rect width="16" height="11" fill="#7a2848"/><path d="M0 0h4l1.5 1.1L4 2.2l1.5 1.1L4 4.4l1.5 1.1L4 6.6l1.5 1.1L4 8.8l1.5 1.1L4 11H0z" fill="#fff"/><rect y="11" width="16" height="1" fill="#000" fill-opacity="0.12"/></svg>
<div class="t" style="left:317px;top:705px;font-size:14px;line-height:14px;transform:scaleX(0.8787);transform-origin:0 0;">QATAR</div>
<div class="t" style="left:392px;top:705px;font-size:14px;line-height:14px;transform:scaleX(0.9498);transform-origin:0 0;">2014-06-15 13:23</div>
<div class="t" style="left:584px;top:705px;font-size:14px;line-height:14px;transform:scaleX(0.9357);transform-origin:0 0;">27,585</div>
<div class="t" style="left:680px;top:705px;font-size:14px;line-height:14px;transform:scaleX(0.8924);transform-origin:0 0;">USB</div>
<div class="t" style="left:776px;top:705px;font-size:14px;line-height:14px;transform:scaleX(0.9293);transform-origin:0 0;">59</div>
<div class="t" style="left:872px;top:705px;font-size:14px;line-height:14px;transform:scaleX(0.8960);transform-origin:0 0;">N</div>
<div class="t" style="left:968px;top:705px;font-size:14px;line-height:14px;transform:scaleX(0.8960);transform-origin:0 0;">N</div>
<div class="r" style="left:1064px;top:702px;width:63px;height:23px;background:#9954bb;"></div>
<div class="t" style="left:1070px;top:708px;font-size:12px;line-height:12px;font-weight:700;color:#fff;transform:scaleX(0.9485);transform-origin:0 0;">View</div>
<div class="r caret" style="left:1110px;top:713px;border-top-color:#fff;border-width:4px 4px 0 4px"></div>
<div class="r" style="left:0px;top:783px;width:1153px;height:1px;background:#ddd;"></div>
<div class="t" style="left:4px;top:740px;font-size:14px;line-height:14px;transform:scaleX(0.9278);transform-origin:0 0;">1054</div>
<div class="t" style="left:101px;top:740px;font-size:14px;line-height:14px;color:#2780e3;text-decoration:underline;transform:scaleX(0.9433);transform-origin:0 0;">34AT/GC</div>
<div class="t" style="left:198px;top:740px;font-size:14px;line-height:14px;transform:scaleX(0.8926);transform-origin:0 0;">PACO</div>
<svg class="r" style="left:295px;top:742px" width="16" height="12" viewBox="0 0 16 12"><rect width="16" height="11" fill="#dd0000"/><rect y="2.75" width="16" height="5.5" fill="#fe2"/><rect x="4.5" y="3.5" width="3" height="4" fill="#c05030"/><rect y="11" width="16" height="1" fill="#000" fill-opacity="0.12"/></svg>
<div class="t" style="left:317px;top:740px;font-size:14px;line-height:14px;transform:scaleX(0.8787);transform-origin:0 0;">CANARY</div>
<div class="t" style="left:295px;top:761px;font-size:14px;line-height:14px;transform:scaleX(0.8790);transform-origin:0 0;">ISLANDS</div>
<div class="t" style="left:392px;top:740px;font-size:14px;line-height:14px;transform:scaleX(0.9498);transform-origin:0 0;">2014-06-15 12:26</div>
<div class="t" style="left:584px;top:740px;font-size:14px;line-height:14px;transform:scaleX(0.9357);transform-origin:0 0;">27,630</div>
<div class="t" style="left:680px;top:740px;font-size:14px;line-height:14px;transform:scaleX(0.8924);transform-origin:0 0;">USB</div>
<div class="t" style="left:776px;top:740px;font-size:14px;line-height:14px;transform:scaleX(0.9293);transform-origin:0 0;">59</div>
<div class="t" style="left:872px;top:740px;font-size:14px;line-height:14px;transform:scaleX(0.8960);transform-origin:0 0;">N</div>
<div class="t" style="left:968px;top:740px;font-size:14px;line-height:14px;transform:scaleX(0.8960);transform-origin:0 0;">N</div>
<div class="r" style="left:1064px;top:737px;width:63px;height:23px;background:#9954bb;"></div>
<div class="t" style="left:1070px;top:743px;font-size:12px;line-height:12px;font-weight:700;color:#fff;transform:scaleX(0.9485);transform-origin:0 0;">View</div>
<div class="r caret" style="left:1110px;top:748px;border-top-color:#fff;border-width:4px 4px 0 4px"></div>
<div class="r" style="left:0px;top:784px;width:1153px;height:52px;background:#f9f9f9;"></div>
<div class="r" style="left:0px;top:836px;width:1153px;height:1px;background:#ddd;"></div>
<div class="t" style="left:4px;top:793px;font-size:14px;line-height:14px;transform:scaleX(0.9278);transform-origin:0 0;">1053</div>
<div class="t" style="left:101px;top:793px;font-size:14px;line-height:14px;color:#2780e3;text-decoration:underline;transform:scaleX(0.9426);transform-origin:0 0;">94DX001</div>
<div class="t" style="left:198px;top:793px;font-size:14px;line-height:14px;transform:scaleX(0.8931);transform-origin:0 0;">ABDULLAH</div>
<svg class="r" style="left:295px;top:795px" width="16" height="12" viewBox="0 0 16 12"><rect width="16" height="11" fill="#fff"/><rect width="16" height="3.67" fill="#00aa33"/><rect y="7.33" width="16" height="3.67" fill="#111"/><rect width="4.5" height="11" fill="#dd2233"/><rect y="11" width="16" height="1" fill="#000" fill-opacity="0.12"/></svg>
<div class="t" style="left:317px;top:793px;font-size:14px;line-height:14px;transform:scaleX(0.8791);transform-origin:0 0;">UNITED</div>
<div class="t" style="left:295px;top:814px;font-size:14px;line-height:14px;transform:scaleX(0.8781);transform-origin:0 0;">ARAB</div>
<div class="t" style="left:295px;top:835px;font-size:14px;line-height:14px;transform:scaleX(0.8781);transform-origin:0 0;">EMIRATES</div>
<div class="t" style="left:392px;top:793px;font-size:14px;line-height:14px;transform:scaleX(0.9498);transform-origin:0 0;">2014-06-14 09:55</div>
<div class="t" style="left:584px;top:793px;font-size:14px;line-height:14px;transform:scaleX(0.9357);transform-origin:0 0;">27,480</div>
<div class="t" style="left:680px;top:793px;font-size:14px;line-height:14px;transform:scaleX(0.8924);transform-origin:0 0;">USB</div>
<div class="t" style="left:776px;top:793px;font-size:14px;line-height:14px;transform:scaleX(0.9293);transform-origin:0 0;">59</div>
<div class="t" style="left:872px;top:793px;font-size:14px;line-height:14px;transform:scaleX(0.8960);transform-origin:0 0;">N</div>
<div class="t" style="left:968px;top:793px;font-size:14px;line-height:14px;transform:scaleX(0.8960);transform-origin:0 0;">N</div>
<div class="r" style="left:1064px;top:790px;width:63px;height:23px;background:#9954bb;"></div>
<div class="t" style="left:1070px;top:796px;font-size:12px;line-height:12px;font-weight:700;color:#fff;transform:scaleX(0.9485);transform-origin:0 0;">View</div>
<div class="r caret" style="left:1110px;top:801px;border-top-color:#fff;border-width:4px 4px 0 4px"></div>
</body></html>
